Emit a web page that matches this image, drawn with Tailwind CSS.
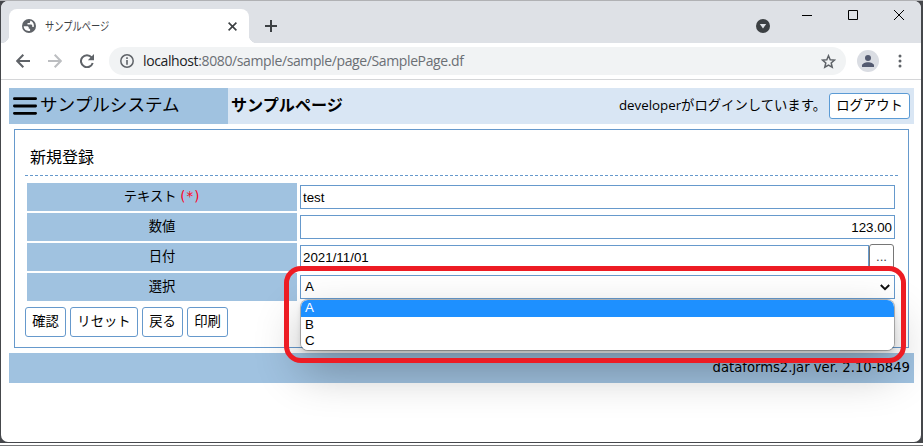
<!DOCTYPE html>
<html lang="ja">
<head>
<meta charset="utf-8">
<title>サンプルページ</title>
<script src="https://cdn.jsdelivr.net/npm/@tailwindcss/browser@4"></script>
</head>
<body class="w-[923px] h-[446px] overflow-hidden bg-[#45474b] font-['Liberation_Sans','Noto_Sans_CJK_JP',sans-serif] text-black">
<div class="relative w-[923px] h-[446px] pl-px pr-[2px] border-t border-[#b0b1b4] bg-[linear-gradient(180deg,#45474b_442px,#fff_442px,#fff_444px,#77787a_444px)]">
  <div class="h-[441px] bg-white rounded-[7px] overflow-hidden flex flex-col">
    <!-- tab strip -->
    <div class="h-[42px] shrink-0 bg-[#dee1e6] flex pt-2 pl-2">
      <div class="relative w-[240px] h-[34px] bg-white rounded-t-[8px] flex items-center pl-[13px]">
        <div class="absolute -left-2 bottom-0 size-2 bg-[radial-gradient(circle_at_0_0,#dee1e6_8px,#fff_8.5px)]"></div>
        <div class="absolute -right-2 bottom-0 size-2 bg-[radial-gradient(circle_at_100%_0,#dee1e6_8px,#fff_8.5px)]"></div>
        <svg class="size-[14px] shrink-0" viewBox="0 0 14 14"><circle cx="7" cy="7" r="7" fill="#5f6368"/><path d="M1.7 7.2h3.500c1 0 1.600.7 1.600 1.600v1h1.300v1.900c-3 .8-6.300-1.200-6.400-4.500zM8.200 1.800v1c0 .8-.6 1.300-1.400 1.300H5.500v1.400h3.400c.8 0 1.400.6 1.400 1.400v1h1.400c.9-2.500-.9-5.700-3.500-6.100z" fill="#fff"/></svg>
        <span class="ml-[9px] w-[160px] text-[12px] leading-[16px] whitespace-nowrap text-[#3c4043] font-['Noto_Sans_CJK_JP',sans-serif] scale-x-[0.77] origin-left">サンプルページ</span>
        <svg class="absolute left-[219px] top-[13px] size-[9px]" viewBox="0 0 9 9" fill="none" stroke="#3c4043" stroke-width="1.6"><path d="M.6.6l7.800 7.800M8.400.6L.6 8.400"/></svg>
      </div>
      <svg class="ml-[16px] mt-[11px] size-3" viewBox="0 0 12 12" fill="none" stroke="#3c4043" stroke-width="2"><path d="M6 0v12M0 6h12"/></svg>
      <div class="ml-auto flex">
        <svg class="mt-[10px] size-[14px]" viewBox="0 0 14 14"><circle cx="7" cy="7" r="7" fill="#3c4043"/><path d="M3.800 5h6.400L7 9.500z" fill="#dee1e6"/></svg>
        <svg class="ml-[32px] mt-[1px] w-[10px] h-[10px]" viewBox="0 0 10 10" stroke="#000"><path d="M0 5.500h10"/></svg>
        <svg class="ml-[36px] mt-[1px] w-[10px] h-[10px]" viewBox="0 0 10 10" fill="none" stroke="#000"><path d="M.5.5h9v9h-9z"/></svg>
        <svg class="ml-[36px] mr-[17px] mt-[1px] w-[10px] h-[10px]" viewBox="0 0 10 10" fill="none" stroke="#000"><path d="M0 0l10 10M10 0L0 10"/></svg>
      </div>
    </div>
    <!-- toolbar -->
    <div class="h-[37px] shrink-0 border-b border-[#d5d6d8] flex items-center pl-[15px] pr-[15px]">
      <svg class="size-[14px]" viewBox="0 0 14 14" fill="none" stroke="#5f6368" stroke-width="2"><path d="M14 7H1.500M7.300 .8L1.200 7l6.100 6.200"/></svg>
      <svg class="ml-[18px] size-[14px]" viewBox="0 0 14 14" fill="none" stroke="#bcbec1" stroke-width="2"><path d="M0 7h12.500M6.700 .8L12.800 7l-6.100 6.200"/></svg>
      <svg class="ml-[18px] size-[14px]" viewBox="0 0 14 14"><path d="M11.600 3.300A6 6 0 1 0 12.700 9" fill="none" stroke="#5f6368" stroke-width="2"/><path d="M14 0v6.200H7.800z" fill="#5f6368"/></svg>
      <div class="ml-[15px] w-[737px] h-7 rounded-full bg-[#f1f3f4] flex items-center pl-[11px] pr-[10px]">
        <svg class="size-[14px]" viewBox="0 0 14 14"><circle cx="7" cy="7" r="6.200" fill="none" stroke="#5f6368" stroke-width="1.500"/><path d="M6.200 3.300h1.600v1.600H6.200zM6.200 6.100h1.600v4.600H6.200z" fill="#5f6368"/></svg>
        <span class="ml-[9px] text-[14px] leading-[20px] whitespace-nowrap text-[#6b6f74] font-['Open_Sans',sans-serif] tracking-[-0.380px]"><span class="text-[#202124]">localhost</span>:8080/sample/sample/page/SamplePage.df</span>
        <svg class="ml-auto size-[15px]" viewBox="0 0 15 15" fill="none" stroke="#5f6368" stroke-width="1.500"><path d="M7.500 1.700l1.700 4 4.300.4-3.300 2.900 1 4.200-3.700-2.200-3.700 2.200 1-4.200L1.500 6.100l4.300-.4z"/></svg>
      </div>
      <svg class="ml-[11px] size-[22px]" viewBox="0 0 22 22"><circle cx="11" cy="11" r="11" fill="#dadde3"/><circle cx="11" cy="8" r="3" fill="#535a70"/><path d="M5 17v-1.500c0-2 3-3.300 6-3.300s6 1.300 6 3.300V17z" fill="#535a70"/></svg>
      <svg class="ml-auto w-[12px] h-[14px]" viewBox="0 0 12 14" fill="#5f6368"><circle cx="6" cy="2" r="1.500"/><circle cx="6" cy="7" r="1.500"/><circle cx="6" cy="12" r="1.500"/></svg>
    </div>
    <!-- application page -->
    <main class="pt-2 pl-2 pr-[7px] flex flex-col">
      <header class="h-9 flex bg-[#d9e6f4]">
        <div class="w-[219px] bg-[#a0c2e0] flex items-center pl-1 gap-[3px]">
          <svg class="w-6 h-[18px]" viewBox="0 0 24 18" stroke="#000" stroke-width="2.800" stroke-linecap="round"><path d="M1.400 1.700h21.200M1.400 9h21.200M1.400 16.300h21.200"/></svg>
          <span class="text-[17.600px] leading-[24px] whitespace-nowrap -translate-y-px">サンプルシステム</span>
        </div>
        <h1 class="pl-[3px] text-[16.100px] leading-[34px] font-bold">サンプルページ</h1>
        <div class="ml-auto pr-1 flex items-center gap-[3px] text-[13.330px]">
          <span class="font-['Open_Sans','Noto_Sans_CJK_JP',sans-serif] whitespace-nowrap leading-[20px] -translate-y-px">developerがログインしています。</span>
          <button class="w-[81px] h-[26px] border border-[#5b9bd5] rounded-[3px] bg-white leading-[22px] pb-px whitespace-nowrap">ログアウト</button>
        </div>
      </header>
      <section class="mt-[5px] ml-[5px] mr-[5px] h-[219px] border border-[#6699cc] pl-[10px] pr-[10px] flex flex-col">
        <h2 class="h-[46px] pl-[5px] pt-[16px] text-[16px] leading-[24px] border-b border-dashed border-[#6699cc]">新規登録</h2>
        <div class="mt-[7px] ml-[2px] mr-[2px] grid grid-cols-[270px_1fr] gap-[2px] text-[13.330px]">
          <div class="h-7 bg-[#a0c2e0] text-center leading-[28px]">テキスト <span class="text-[#ff0020] font-['DejaVu_Sans',sans-serif] tracking-[1px]">(*)</span></div>
          <div class="h-6 mt-[2px] mx-px border border-[#6699cc] px-[2px] leading-[24px]">test</div>
          <div class="h-7 bg-[#a0c2e0] text-center leading-[28px]">数値</div>
          <div class="h-6 mt-[2px] mx-px border border-[#6699cc] px-[2px] leading-[24px] text-right">123.00</div>
          <div class="h-7 bg-[#a0c2e0] text-center leading-[28px]">日付</div>
          <div class="mt-[1px] mx-px flex"><div class="h-6 mt-px w-[569px] border border-[#6699cc] px-[2px] leading-[24px]">2021/11/01</div><button class="w-[25px] h-[26px] border border-[#767676] rounded-[3px] leading-[24px] text-[#444]">...</button></div>
          <div class="h-7 bg-[#a0c2e0] text-center leading-[28px]">選択</div>
          <div class="h-6 mt-[2px] mx-px border border-[#6699cc] pl-[4px] pr-[4px] leading-[24px] flex justify-between items-center"><span>A</span><svg class="w-[10px] h-[7px]" viewBox="0 0 10 7" fill="none" stroke="#111" stroke-width="2"><path d="M.8 1l4.200 4.200L9.200 1"/></svg></div>
        </div>
        <div class="mt-[6px] flex gap-1 text-[13.330px] leading-[26px]">
          <button class="w-[41px] h-[30px] border border-[#6699cc] rounded-[3px]">確認</button>
          <button class="w-[68px] h-[30px] border border-[#6699cc] rounded-[3px]">リセット</button>
          <button class="w-[41px] h-[30px] border border-[#6699cc] rounded-[3px]">戻る</button>
          <button class="w-[41px] h-[30px] border border-[#6699cc] rounded-[3px]">印刷</button>
        </div>
      </section>
      <footer class="mt-[5px] h-[30px] bg-[#a0c2e0] text-right pr-1 text-[13.200px] leading-[30px] font-['DejaVu_Sans',sans-serif]">dataforms2.jar ver. 2.10-b849</footer>
    </main>
  </div>
  <!-- open list of the select box -->
  <div class="absolute left-[301px] top-[299px] w-[593px] h-[50px] rounded-[7px] overflow-hidden bg-white z-10 text-[13.330px] leading-[16px]">
    <div class="h-[17px] pl-1 bg-[#1e90ff] text-white leading-[16px]">A</div>
    <div class="h-4 pl-1">B</div>
    <div class="h-4 pl-1">C</div>
  </div>
  <div class="absolute left-[301px] top-[299px] w-[593px] h-[50px] rounded-[7px] shadow-[0_0_0_1px_rgba(0,0,0,0.25),0_2px_5px_rgba(0,0,0,0.15),0_20px_46px_rgba(0,0,0,0.3)]"></div>
  <!-- highlight ring -->
  <div class="absolute left-[284px] top-[265px] w-[622px] h-[97px] rounded-[17px] border-[5px] border-[#ed1c24] z-20"></div>
</div>
</body>
</html>
